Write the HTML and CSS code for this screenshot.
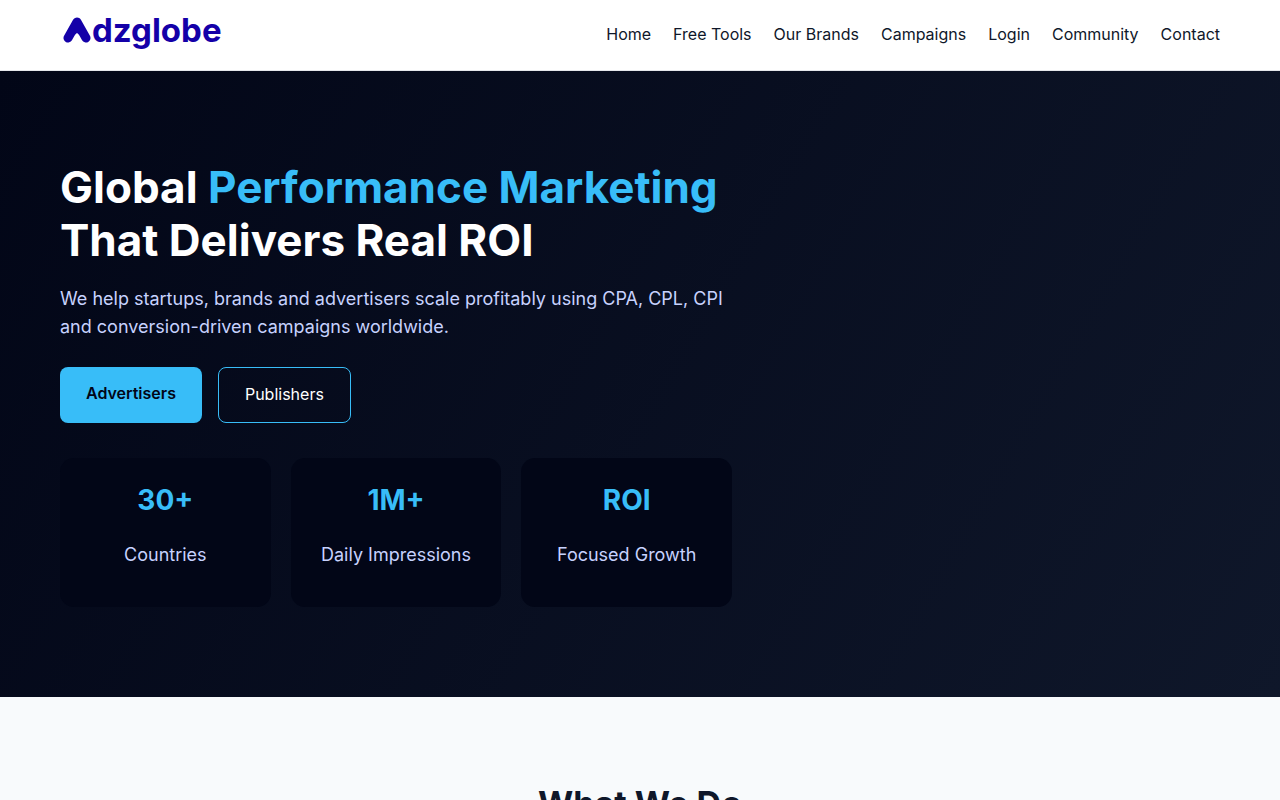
FILE: index.html
```html
<!DOCTYPE html>
<html lang="en">
<head>
  <meta charset="UTF-8" />
  <meta name="viewport" content="width=device-width, initial-scale=1.0" />
  <title>Adzglobe</title>
  <link rel="stylesheet" href="styles.css">
</head>
<body>

  <header>
    <div class="container nav">
      <a class="logo" href="#" aria-label="Adzglobe">
        <svg class="logo-mark" width="29" height="26" viewBox="0 0 29 26" aria-hidden="true">
          <path d="M5 21 L14 5 L23 21" fill="none" stroke="#1400a8" stroke-width="9" stroke-linecap="round" stroke-linejoin="round"/>
          <path d="M14 6 L19 20 L14 16 L9 20 Z" fill="#1400a8"/>
        </svg>
        <span>dzglobe</span>
      </a>
      <nav>
        <a href="#">Home</a>
        <a href="#">Free Tools</a>
        <a href="#">Our Brands</a>
        <a href="#">Campaigns</a>
        <a href="#">Login</a>
        <a href="#">Community</a>
        <a href="#">Contact</a>
      </nav>
    </div>
  </header>

  <section class="hero">
    <div class="container hero-grid">
      <div>
        <h1>Global <span>Performance Marketing</span><br>That Delivers Real ROI</h1>
        <p>We help startups, brands and advertisers scale profitably using CPA, CPL, CPI and conversion-driven campaigns worldwide.</p>

        <div class="hero-buttons">
          <a href="#" class="btn-primary">Advertisers</a>
          <a href="#" class="btn-outline">Publishers</a>
        </div>

        <div class="stats">
          <div class="stat">
            <h3>30+</h3>
            <p>Countries</p>
          </div>
          <div class="stat">
            <h3>1M+</h3>
            <p>Daily Impressions</p>
          </div>
          <div class="stat">
            <h3>ROI</h3>
            <p>Focused Growth</p>
          </div>
        </div>
      </div>
    </div>
  </section>

  <section class="services">
    <div class="container">
      <h2>What We Do</h2>
    </div>
  </section>

</body>
</html>
```

FILE: styles.css
```css
* {
  margin: 0;
  padding: 0;
  box-sizing: border-box;
}
body {
  font-family: Inter, sans-serif;
  font-size: 16px;
  line-height: 25px;
  background: #f8fafc;
  color: #0f172a;
}
a {
  text-decoration: none;
}
.container {
  max-width: 1200px;
  margin: auto;
  padding: 0 20px;
}

/* Header */
header {
  background: #fff;
  border-bottom: 1px solid #e5e7eb;
}
.nav {
  display: flex;
  align-items: center;
  justify-content: space-between;
  min-height: 70px;
}
.logo {
  display: flex;
  align-items: center;
  padding: 0 0 10px 3px;
  font-size: 33px;
  font-weight: 700;
  line-height: 40px;
  color: #1400a8;
}
nav {
  display: flex;
  flex-wrap: wrap;
  gap: 22px;
  padding-bottom: 2px;
}
nav a {
  color: #0f172a;
}
nav a:hover {
  color: #38bdf8;
}

/* Hero */
.hero {
  padding: 90px 0;
  background: linear-gradient(120deg, #020617, #0f172a);
  color: #fff;
}
.hero-grid {
  display: grid;
  grid-template-columns: 3fr 2fr;
  gap: 40px;
}
.hero h1 {
  font-size: 44px;
  line-height: 53px;
}
.hero h1 span {
  color: #38bdf8;
}
.hero p {
  margin: 18px 0;
  font-size: 18px;
  line-height: 28px;
  color: #c7d2fe;
}
.hero-buttons {
  display: flex;
  gap: 16px;
  margin-top: 26px;
}
.btn-primary,
.btn-outline {
  padding: 14px 26px 15px;
  border-radius: 8px;
}
.btn-primary {
  background: #38bdf8;
  color: #020617;
  font-weight: 600;
}
.btn-outline {
  border: 1px solid #38bdf8;
  color: #fff;
}
.stats {
  display: grid;
  grid-template-columns: repeat(3, 1fr);
  gap: 20px;
  margin-top: 35px;
}
.stat {
  padding: 20px;
  background: #020617;
  border-radius: 14px;
  text-align: center;
}
.stat h3 {
  font-size: 28px;
  line-height: 45px;
  color: #38bdf8;
}

/* Services */
.services {
  padding: 80px 0;
}
.services h2 {
  font-size: 34px;
  line-height: 54px;
  text-align: center;
}
```
